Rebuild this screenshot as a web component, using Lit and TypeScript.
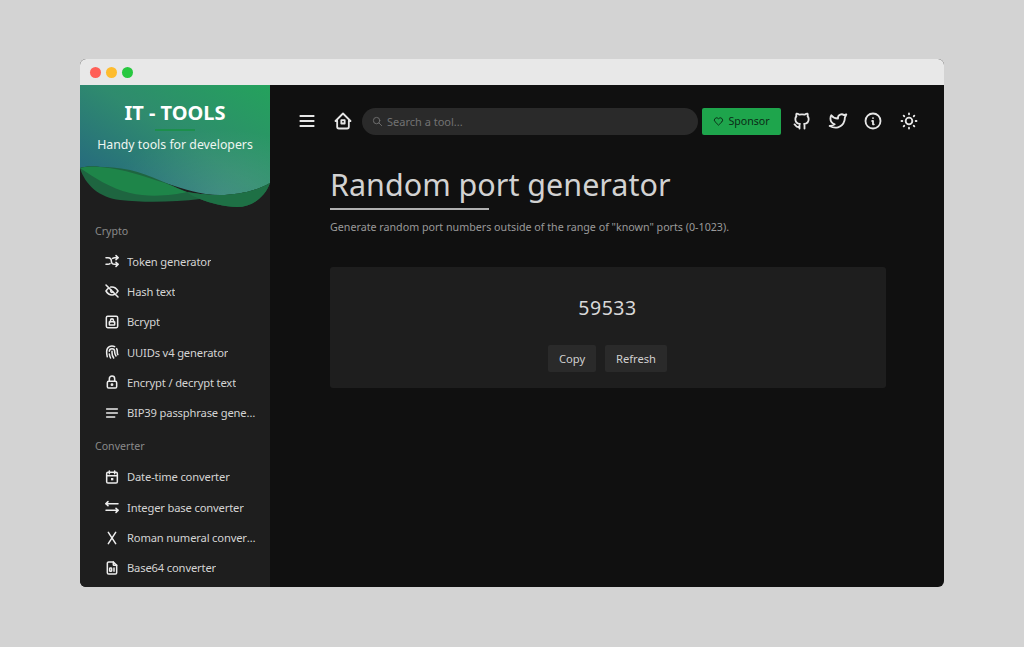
import { LitElement, html, css, svg } from "lit";
import { customElement } from "lit/decorators.js";

const I = {
  shuffle: svg`<path d="M18 4l3 3l-3 3"/><path d="M18 20l3 -3l-3 -3"/><path d="M3 7h3a5 5 0 0 1 5 5a5 5 0 0 0 5 5h5"/><path d="M21 7h-5a4.978 4.978 0 0 0 -3 1m-4 8a4.984 4.984 0 0 1 -3 1h-3"/>`,
  eyeOff: svg`<path d="M10.585 10.587a2 2 0 0 0 2.829 2.828"/><path d="M16.681 16.673a8.717 8.717 0 0 1 -4.681 1.327c-3.6 0 -6.6 -2 -9 -6c1.272 -2.12 2.712 -3.678 4.32 -4.674m2.86 -1.146a9.055 9.055 0 0 1 1.82 -.18c3.6 0 6.6 2 9 6c-.666 1.11 -1.379 2.067 -2.138 2.87"/><path d="M3 3l18 18"/>`,
  bcrypt: svg`<rect x="3.5" y="3.5" width="17" height="17" rx="2"/><rect x="8" y="11.5" width="8" height="5" rx=".6"/><path d="M9.8 11.5v-2a2.2 2.2 0 0 1 4.4 0v2"/>`,
  finger: svg`<path d="M18.9 7a8 8 0 0 1 1.1 5v1a6 6 0 0 0 .8 3"/><path d="M8 11a4 4 0 0 1 8 0v1a10 10 0 0 0 2 6"/><path d="M12 11v2a14 14 0 0 0 2.5 8"/><path d="M8 15a18 18 0 0 0 1.8 6"/><path d="M4.9 19a22 22 0 0 1 -.9 -7v-1a8 8 0 0 1 12 -6.95"/>`,
  lock: svg`<path d="M5 13a2 2 0 0 1 2 -2h10a2 2 0 0 1 2 2v6a2 2 0 0 1 -2 2h-10a2 2 0 0 1 -2 -2v-6z"/><path d="M11 16a1 1 0 1 0 2 0a1 1 0 0 0 -2 0"/><path d="M8 11v-4a4 4 0 1 1 8 0v4"/>`,
  lines: svg`<path d="M4 6h16"/><path d="M4 12h16"/><path d="M4 18h12"/>`,
  calendar: svg`<rect x="4" y="5" width="16" height="16" rx="2"/><path d="M16 3v4"/><path d="M8 3v4"/><path d="M4 10h16"/><rect x="10.5" y="13.5" width="3.5" height="3.5" fill="currentColor" stroke="none"/>`,
  arrows: svg`<path d="M3 7h18"/><path d="M6 10l-3 -3l3 -3"/><path d="M18 20l3 -3l-3 -3"/><path d="M3 17h18"/>`,
  x: svg`<path d="M6.5 3.5l11 17"/><path d="M17.5 3.5l-11 17"/>`,
  file: svg`<path d="M14 3v4a1 1 0 0 0 1 1h4"/><path d="M17 21h-10a2 2 0 0 1 -2 -2v-14a2 2 0 0 1 2 -2h7l5 5v11a2 2 0 0 1 -2 2z"/><rect x="8.5" y="12" width="3" height="5" rx="1"/><path d="M15 12v5"/>`,
  menu: svg`<path d="M4 6h16"/><path d="M4 12h16"/><path d="M4 18h16"/>`,
  home: svg`<path d="M5 12H3l9-9 9 9h-2"/><path d="M5 12v7a2 2 0 0 0 2 2h10a2 2 0 0 0 2-2v-7"/><rect x="10" y="11" width="4" height="4"/>`,
  search: svg`<circle cx="10" cy="10" r="7"/><path d="M21 21l-6-6"/>`,
  heart: svg`<path d="M19.5 12.572l-7.5 7.428l-7.5 -7.428a5 5 0 1 1 7.5 -6.566a5 5 0 1 1 7.5 6.572"/>`,
  github: svg`<path d="M9 19c-4.3 1.4 -4.3 -2.5 -6 -3m12 5v-3.5c0 -1 .1 -1.4 -.5 -2c2.8 -.3 5.5 -1.4 5.5 -6a4.6 4.6 0 0 0 -1.3 -3.2a4.2 4.2 0 0 0 -.1 -3.2s-1.1 -.3 -3.5 1.3a12.3 12.3 0 0 0 -6.2 0c-2.4 -1.6 -3.5 -1.3 -3.5 -1.3a4.2 4.2 0 0 0 -.1 3.2a4.6 4.6 0 0 0 -1.3 3.2c0 4.6 2.7 5.7 5.5 6c-.6 .6 -.6 1.2 -.5 2v3.5"/>`,
  twitter: svg`<path d="M22 4.01c-1 .49 -1.98 .689 -3 .99c-1.121 -1.265 -2.783 -1.335 -4.38 -.737s-2.643 2.06 -2.62 3.737v1c-3.245 .083 -6.135 -1.395 -8 -4c0 0 -4.182 7.433 4 11c-1.872 1.247 -3.739 2.088 -6 2c3.308 1.803 6.913 2.423 10.034 1.517c3.58 -1.04 6.522 -3.723 7.651 -7.742a13.84 13.84 0 0 0 .497 -3.753c0 -.249 1.51 -2.772 1.818 -4.013z"/>`,
  info: svg`<circle cx="12" cy="12" r="9"/><path d="M12 8.5h.01"/><path d="M11 12h1v4h1"/>`,
  sun: svg`<circle cx="12" cy="12" r="4"/><path d="M3 12h1m8 -9v1m8 8h1m-9 8v1m-6.4 -15.4l.7 .7m12.1 -.7l-.7 .7m0 11.4l.7 .7m-12.1 -.7l-.7 .7"/>`,
};

const icon = (p: unknown, cls = "") =>
  html`<svg class=${cls} viewBox="0 0 24 24" fill="none" stroke="currentColor" stroke-linecap="round" stroke-linejoin="round">${p}</svg>`;

const groups = [
  { name: "Crypto", items: [
    [I.shuffle, "Token generator"], [I.eyeOff, "Hash text"], [I.bcrypt, "Bcrypt"],
    [I.finger, "UUIDs v4 generator"], [I.lock, "Encrypt / decrypt text"], [I.lines, "BIP39 passphrase generator"],
  ]},
  { name: "Converter", items: [
    [I.calendar, "Date-time converter"], [I.arrows, "Integer base converter"],
    [I.x, "Roman numeral converter"], [I.file, "Base64 converter"],
  ]},
];

@customElement("app-root")
export class AppRoot extends LitElement {
  static styles = css`
    :host { display: block; height: 647px; box-sizing: border-box; padding: 59px 80px 60px; background: #d3d3d3;
      font-family: "Noto Sans", "Open Sans", sans-serif; overflow: hidden; }
    .window { height: 528px; display: flex; flex-direction: column; border-radius: 6px; overflow: hidden; background: #101010; }
    .chrome { height: 26px; flex: none; background: #e8e8e8; display: flex; align-items: center; gap: 5px; padding-left: 10px; }
    .dot { width: 11px; height: 11px; border-radius: 50%; }
    .body { flex: 1; display: flex; min-height: 0; }
    .side { width: 190px; flex: none; background: #1e1e1e; overflow: hidden; }
    .hero { position: relative; height: 126px; color: #fff; text-align: center; }
    .hero svg { position: absolute; inset: 0; width: 190px; height: 126px; }
    .hero-text { position: relative; display: flex; flex-direction: column; align-items: center; }
    .brand { font-size: 20px; font-weight: 700; line-height: 26px; margin-top: 15px; }
    .rule { width: 40px; height: 1.5px; background: #1c8f4c; margin-top: 3px; }
    .tag { font-size: 12.3px; line-height: 18px; margin-top: 5px; color: #eef6f1; }
    .label { font-size: 10.6px; line-height: 14px; color: #8a8a8a; padding-left: 15px; margin: 13px 0 8px; }
    .group + .group .label { margin: 11px 0 9px; }
    .menu { padding: 0 13px 0 24px; }
    .item { display: flex; align-items: center; height: 30.3px; gap: 7px; color: #d4d4d4; font-size: 11.2px; letter-spacing: -.16px; }
    .item svg { width: 16px; height: 16px; flex: none; color: #ececec; stroke-width: 2.3; }
    .item span { overflow: hidden; white-space: nowrap; text-overflow: ellipsis; }
    .main { flex: 1; min-width: 0; padding: 22px 0 0 27px; }
    .bar { display: flex; align-items: center; height: 28px; color: #e6e6e6; }
    .bar > svg { width: 20px; height: 20px; flex: none; stroke-width: 2.2; }
    .menu-ic { margin-right: 16px; }
    .home { margin-right: 9px; }
    .search { width: 336px; height: 27px; box-sizing: border-box; border-radius: 14px; background: #2a2a2a; display: flex; align-items: center; gap: 4px; padding-left: 10px; color: #727272; font-size: 11px; margin-right: 4px; }
    .search svg { width: 11px; height: 11px; stroke-width: 2; }
    .sponsor { width: 79px; height: 27px; box-sizing: border-box; border-radius: 2px; background: #1ea54c; color: #0b2a16; display: flex; align-items: center; justify-content: center; gap: 4px; font-size: 10.6px; margin-right: 11px; }
    .sponsor svg { width: 11px; height: 11px; stroke-width: 2; }
    .gh { margin-right: 16px; }
    .tw { margin-right: 15px; }
    .inf { margin-right: 16px; }
    .page { width: 556px; margin: 29px 0 0 33px; }
    h1 { margin: 0; font-weight: 400; font-size: 30.5px; line-height: 40px; color: #d2d2d2; }
    .line { width: 159px; height: 1.5px; background: #b0b0b0; margin-top: 4px; }
    .desc { font-size: 10.7px; line-height: 16px; color: #9a9a9a; margin-top: 9px; }
    .card { margin-top: 32px; height: 121px; box-sizing: border-box; background: #1e1e1e; border-radius: 3px; display: flex; flex-direction: column; align-items: center; padding: 27px 1px 0 0; }
    .num { font-size: 19.5px; line-height: 28px; color: #d8d8d8; letter-spacing: .5px; }
    .btns { display: flex; gap: 9px; margin-top: 23px; }
    .btn { height: 27px; display: flex; align-items: center; justify-content: center; background: #2a2a2a; border-radius: 2px; color: #d0d0d0; font-size: 11.2px; }
    .copy { width: 48px; }
    .refresh { width: 62px; }
  `;

  render() {
    return html`<div class="window">
      <div class="chrome">
        <div class="dot" style="background:#ff5f57"></div>
        <div class="dot" style="background:#febc2e"></div>
        <div class="dot" style="background:#28c840"></div>
      </div>
      <div class="body">
        <aside class="side">
          <div class="hero">
            <svg viewBox="0 0 190 126">
              <defs>
                <linearGradient id="g" x1="0" y1=".9" x2="1" y2="0">
                  <stop offset="0" stop-color="#256680"/><stop offset=".5" stop-color="#2f8b6e"/><stop offset="1" stop-color="#24a25c"/>
                </linearGradient>
                <radialGradient id="s" cx=".75" cy="1" r=".6">
                  <stop offset="0" stop-color="#fff" stop-opacity=".1"/><stop offset="1" stop-color="#fff" stop-opacity="0"/>
                </radialGradient>
              </defs>
              <path d="M0 0H190V98C178 105 160 110 140 110C120 110 105 104 85 98C65 92 45 84 20 82C10 81 3 82 0 83Z" fill="url(#g)"/>
              <path d="M0 0H190V98C178 105 160 110 140 110C120 110 105 104 85 98C65 92 45 84 20 82C10 81 3 82 0 83Z" fill="url(#s)"/>
              <path d="M0 83C5 100 20 113 40 115C65 118 95 117 120 114C130 118 145 122 157 122C172 122 185 112 190 98C178 105 160 110 140 110C125 110 115 108 107 107C90 100 70 90 50 85C30 81 10 81 0 83Z" fill="#1e6540"/>
              <path d="M107 107C115 108 125 110 140 110C160 110 178 105 190 98C185 112 172 122 157 122C145 122 130 118 120 114C115 112 110 110 107 107Z" fill="#1e7045"/>
              <path d="M0 83C3 82 10 81 20 82C45 84 65 92 85 98C95 102 100 105 107 107C95 110 70 113 50 108C30 103 15 93 0 83Z" fill="#1e8549"/>
            </svg>
            <div class="hero-text">
              <div class="brand">IT - TOOLS</div>
              <div class="rule"></div>
              <div class="tag">Handy tools for developers</div>
            </div>
          </div>
          ${groups.map((g) => html`<div class="group">
            <div class="label">${g.name}</div>
            <div class="menu">${g.items.map(([p, t]) => html`<div class="item">${icon(p)}<span>${t}</span></div>`)}</div>
          </div>`)}
        </aside>
        <main class="main">
          <div class="bar">
            ${icon(I.menu, "menu-ic")}${icon(I.home, "home")}
            <div class="search">${icon(I.search)}<span>Search a tool...</span></div>
            <div class="sponsor">${icon(I.heart)}<span>Sponsor</span></div>
            ${icon(I.github, "gh")}${icon(I.twitter, "tw")}${icon(I.info, "inf")}${icon(I.sun)}
          </div>
          <div class="page">
            <h1>Random port generator</h1>
            <div class="line"></div>
            <div class="desc">Generate random port numbers outside of the range of "known" ports (0-1023).</div>
            <div class="card">
              <div class="num">59533</div>
              <div class="btns">
                <div class="btn copy">Copy</div>
                <div class="btn refresh">Refresh</div>
              </div>
            </div>
          </div>
        </main>
      </div>
    </div>`;
  }
}
